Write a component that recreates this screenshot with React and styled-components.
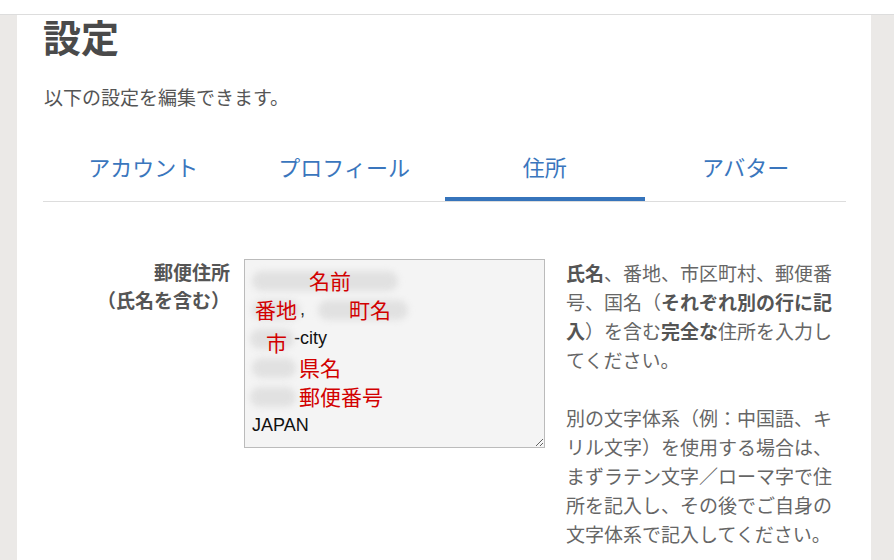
import React from 'react'
import styled, { createGlobalStyle } from 'styled-components'

const GlobalStyle = createGlobalStyle`
  html, body {
    margin: 0;
    padding: 0;
    background: #ebe9e7;
    font-family: "Noto Sans CJK JP", "Noto Sans", sans-serif;
  }
`

const TopBar = styled.div`
  height: 14px;
  background: #fff;
  border-bottom: 1px solid #dddddd;
`

const Page = styled.div`
  padding: 0 23px 0 17px;
`

const Panel = styled.main`
  background: #fff;
  padding: 2px 25px 40px 26px;
  min-height: 545px;
`

const Title = styled.h1`
  margin: 0;
  font-size: 38px;
  line-height: 38px;
  font-weight: 700;
  color: #4a4a4a;
`

const Lead = styled.p`
  margin: 28px 0 0 1px;
  font-size: 19px;
  line-height: 28px;
  color: #555;
`

const Tabs = styled.nav`
  display: grid;
  grid-template-columns: repeat(4, 1fr);
  margin-top: 19px;
  border-bottom: 1px solid #dddddd;
`

const Tab = styled.div`
  padding: 21px 0 16px;
  text-align: center;
  font-size: 22px;
  line-height: 30px;
  color: #3a76bd;
  border-bottom: 4px solid ${({ active }) => (active ? '#3674bb' : 'transparent')};
`

const FormRow = styled.section`
  display: grid;
  grid-template-columns: 187px auto 1fr;
  margin-top: 57px;
`

const Label = styled.label`
  margin-top: -1px;
  text-align: right;
  font-size: 19px;
  line-height: 28px;
  font-weight: 700;
  color: #555;
`

const AddressBox = styled.div`
  box-sizing: border-box;
  margin-left: 14px;
  width: 301px;
  height: 189px;
  padding: 6px 7px;
  background: #f4f4f4;
  border: 1px solid #bbbbbb;
  font-family: "Liberation Sans", Arial, sans-serif;
  font-size: 18px;
  line-height: 29px;
  color: #111;
  resize: both;
  overflow: hidden;
`

const Line = styled.div`
  display: flex;
  align-items: center;
  height: 29px;
  white-space: pre;
`

const Redact = styled.span`
  position: relative;
  display: inline-flex;
  align-items: center;
  box-sizing: border-box;
  width: ${({ w }) => w}px;
  height: 29px;
  padding-left: ${({ pad }) => pad || 0}px;
  margin-left: ${({ ml }) => ml || 0}px;

  &::before {
    content: '';
    position: absolute;
    left: 0;
    right: 0;
    top: 5px;
    bottom: 4px;
    background: #e1e1e1;
    border-radius: 10px;
    filter: blur(3px);
  }
`

const Note = styled.span`
  position: relative;
  margin-left: ${({ ml }) => ml || 0}px;
  top: ${({ dy }) => dy || 0}px;
  font-family: "Noto Sans CJK JP", sans-serif;
  font-size: 21px;
  line-height: 29px;
  color: #d20000;
`

const Help = styled.div`
  margin-left: 21px;
  margin-top: -1px;
  font-size: 19px;
  line-height: 29px;
  color: #666;

  p {
    margin: 0 0 29px;
  }

  strong {
    color: #555;
  }
`

const tabs = ['アカウント', 'プロフィール', '住所', 'アバター']

const App = () => (
  <>
    <GlobalStyle />
    <TopBar />
    <Page>
      <Panel>
        <Title>設定</Title>
        <Lead>以下の設定を編集できます。</Lead>
        <Tabs>
          {tabs.map((t) => (
            <Tab key={t} active={t === '住所'}>{t}</Tab>
          ))}
        </Tabs>
        <FormRow>
          <Label>
            郵便住所
            <br />
            （氏名を含む）
          </Label>
          <AddressBox>
            <Line>
              <Redact w={146} pad={57}><Note>名前</Note></Redact>
            </Line>
            <Line>
              <Redact w={48} pad={3}><Note>番地</Note></Redact>
              <span>, </span>
              <Redact w={90} pad={31} ml={8}><Note>町名</Note></Redact>
            </Line>
            <Line>
              <Redact w={44} pad={16} ml={-2}><Note dy={4}>市</Note></Redact>
              <span>-city</span>
            </Line>
            <Line>
              <Redact w={44} />
              <Note ml={3}>県名</Note>
            </Line>
            <Line>
              <Redact w={46} ml={-2} />
              <Note ml={3}>郵便番号</Note>
            </Line>
            <Line>JAPAN</Line>
          </AddressBox>
          <Help>
            <p>
              <strong>氏名</strong>、番地、市区町村、郵便番号、国名（<strong>それぞれ別の行に記入</strong>）を含む<strong>完全な</strong>住所を入力してください。
            </p>
            <p>
              別の文字体系（例：中国語、キリル文字）を使用する場合は、まずラテン文字／ローマ字で住所を記入し、その後でご自身の文字体系で記入してください。
            </p>
          </Help>
        </FormRow>
      </Panel>
    </Page>
  </>
)

export default App
